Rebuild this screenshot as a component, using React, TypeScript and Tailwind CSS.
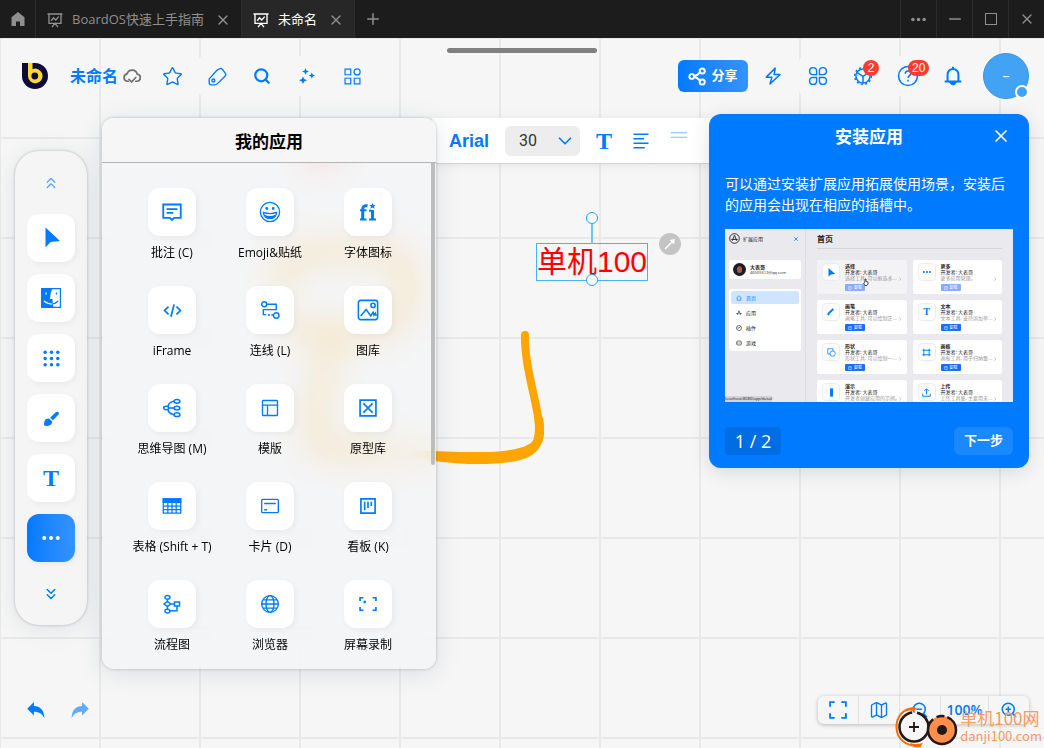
import { useState } from 'react'
import type { ReactNode } from 'react'
import { Bell, ChevronDown, ChevronsDown, ChevronsUp, Map as MapIcon, Minus, Plus, Search, Star, X, ZoomIn, ZoomOut } from 'lucide-react'

function Icon({ size = 24, width = 2, fill = 'none', children }: { size?: number; width?: number; fill?: string; children: ReactNode }) {
  return (
    <svg width={size} height={size} viewBox="0 0 24 24" fill={fill} stroke="currentColor" strokeWidth={width} aria-hidden="true">
      {children}
    </svg>
  )
}

const BoardIcon = () => (
  <Icon size={18} width={1.8}>
    <path d="M2 4h20M4 4v12.500h16V4M8 21.500l4-5 4 5M7 13l3-4 3 3 4-4.500" />
  </Icon>
)

// ---- title bar

function TitleBar() {
  return (
    <div className="flex h-[38px] shrink-0 items-stretch bg-[#1c1c1c] text-[#8f8f8f]">
      <button aria-label="主页" className="flex w-9 items-center justify-center border-r border-[#2c2c2c]">
        <svg width="14" height="14" viewBox="0 0 14 14" fill="currentColor" aria-hidden="true">
          <path d="M7 0l6.500 5.300V14H9V9.500H5V14H.5V5.300z" />
        </svg>
      </button>
      <Tab title="BoardOS快速上手指南" />
      <Tab title="未命名" active />
      <button aria-label="新建" className="flex w-9 items-center justify-center">
        <Plus size={18} />
      </button>
      <div className="ml-auto flex">
        <button aria-label="更多" className="flex w-9 items-center justify-center border-l border-[#2c2c2c]">
          <Icon size={15} fill="currentColor" width={0}>
            <circle cx="3" cy="12" r="2.800" /><circle cx="12" cy="12" r="2.800" /><circle cx="21" cy="12" r="2.800" />
          </Icon>
        </button>
        <button aria-label="最小化" className="flex w-9 items-center justify-center border-l border-[#2c2c2c]"><Minus size={18} /></button>
        <button aria-label="最大化" className="flex w-9 items-center justify-center border-l border-[#2c2c2c]"><span className="size-3 border border-current" /></button>
        <button aria-label="关闭" className="flex w-9 items-center justify-center border-l border-[#2c2c2c]"><X size={16} /></button>
      </div>
    </div>
  )
}

function Tab({ title, active }: { title: string; active?: boolean }) {
  return (
    <div className={`flex items-center border-r border-[#2c2c2c] px-[10px] pt-px text-[13px] ${active ? 'bg-[#272727] text-white' : ''}`}>
      <BoardIcon />
      <span className="ml-2 whitespace-nowrap">{title}</span>
      <button aria-label={`关闭 ${title}`} className="ml-[11px] text-[#8f8f8f]"><X size={16} /></button>
    </div>
  )
}

// ---- header

function ToolButton({ label, children, badge }: { label: string; children: ReactNode; badge?: string }) {
  return (
    <button aria-label={label} className="relative flex size-10 items-center justify-center rounded-lg bg-[#f6f6f6]">
      {children}
      {badge && (
        <span className="absolute top-1 left-5 flex h-4 min-w-4 items-center justify-center rounded-full bg-[#ff3b30] px-1 font-[Liberation_Sans,sans-serif] text-[12px] leading-4 text-white">
          {badge}
        </span>
      )}
    </button>
  )
}

function Header() {
  return (
    <header className="flex h-[46px] items-center text-[#007aff]">
      <svg className="ml-[7px]" width="26" height="26" viewBox="0 0 26 26" aria-label="BoardOS">
        <path d="M0 0h13a13 13 0 1 1-13 13z" fill="#0e0a3c" />
        <path d="M6 0h4.500v6.200A7.300 7.300 0 1 1 6 13z" fill="#ffd92e" />
        <circle cx="12.800" cy="13" r="3.400" fill="#0e0a3c" />
      </svg>
      <h1 className="ml-[22px] text-base font-semibold whitespace-nowrap">未命名</h1>
      <span className="ml-[5px] text-[#6f6f6f]">
        <Icon size={18} width={2.300}>
          <path d="M7 19H6a5 5 0 0 1-.5-9.900A7 7 0 0 1 19 9.500a4.800 4.800 0 0 1 0 9.500h-2" strokeLinecap="round" />
          <path d="M8 16.500l3.500 3.500 5.500-6" strokeLinecap="round" />
        </Icon>
      </span>
      <div className="ml-[11px] flex gap-[5px]">
        <ToolButton label="收藏"><Star size={21} strokeWidth={1.600} /></ToolButton>
        <ToolButton label="标签">
          <Icon size={19} width={1.700}>
            <path d="M1.500 15L11 4.500q2-2 4.500-2.500 1.700-.3 2.700 1L22 8q1.200 1.700-.3 3.500L12 21q-1.500 1.500-4 1.500H4q-2.500 0-2.500-2.500z" />
            <circle cx="6.800" cy="17" r="1.900" />
          </Icon>
        </ToolButton>
        <ToolButton label="搜索"><Search size={18} strokeWidth={3} /></ToolButton>
        <ToolButton label="智能">
          <svg width="16" height="16" viewBox="0 0 16 16" fill="currentColor" aria-hidden="true">
            <path d="M6.500 0l1 2.400 2.500 1-2.500 1-1 2.400-1-2.400-2.500-1 2.500-1zM12.800 4.500l.9 2.100 2.300.9-2.300.9-.9 2.300-.9-2.300-2.200-.9 2.200-.9zM4 8.500l1.200 2.600L8 12.300l-2.800 1.200L4 16l-1.200-2.500L0 12.300l2.800-1.200z" />
          </svg>
        </ToolButton>
        <ToolButton label="组件">
          <Icon size={17} width={1.700}>
            <path d="M1.500 1.500h8v8h-8zM1.500 14.500h8v8h-8zM14.500 14.500h8v8h-8z" /><circle cx="18.500" cy="5.500" r="4.300" />
          </Icon>
        </ToolButton>
      </div>

      <div className="ml-auto flex items-center gap-[5px]">
        <button className="flex h-8 w-[70px] items-center justify-center gap-1 rounded-md bg-linear-to-r from-[#007aff] to-[#3393ff] text-[13px] font-bold whitespace-nowrap text-white">
          <Icon size={19} width={2.500}>
            <circle cx="4.800" cy="12" r="3" /><circle cx="18" cy="5" r="3.200" /><circle cx="18" cy="19" r="3.200" />
            <path d="M7.800 11.500q4-.5 7-4.500M7.800 12.500q4 .5 7 4.500" />
          </Icon>
          分享
        </button>
        <ToolButton label="快捷">
          <Icon size={18} width={2}><path d="M15 1.500L3 13.500h7.500L8 22.500 21.500 10H13.500z" strokeLinejoin="round" /></Icon>
        </ToolButton>
        <ToolButton label="应用">
          <Icon size={20} width={1.700}>
            <path d="M10.300 10.300H6a4.200 4.200 0 1 1 4.300-4.200zM13.700 10.300H18a4.200 4.200 0 1 0-4.300-4.200zM10.300 13.700H6a4.200 4.200 0 1 0 4.300 4.200zM13.700 13.700H18a4.200 4.200 0 1 1-4.300 4.200z" />
          </Icon>
        </ToolButton>
        <ToolButton label="插件" badge="2">
          <Icon size={20} width={1.800}>
            <circle cx="12" cy="12" r="8.500" /><circle cx="12" cy="12" r="10" strokeDasharray="2.500 2.740" />
            <path d="M12 12.500V20M12 12.500L5 8M12 12.500l7-4.500" />
          </Icon>
        </ToolButton>
        <ToolButton label="帮助" badge="20">
          <Icon size={22} width={1.700}>
            <circle cx="12" cy="12" r="10.300" />
            <path d="M9 9.500c0-4 6-4 6-.2 0 2.400-3 2.200-3 5M12 16.200v1.900" />
          </Icon>
        </ToolButton>
        <ToolButton label="通知">
          <Icon size={20} width={2.400}>
            <path d="M12 1v3M5.500 18v-8a6.500 6.500 0 0 1 13 0v8M2 18.500h20" /><path d="M9.500 20.500q2.500 3 5 0z" fill="currentColor" />
          </Icon>
        </ToolButton>
        <button aria-label="账户" className="relative ml-[5px] flex size-[46px] items-center justify-center rounded-full border border-[#3b93dc] bg-[#42a3f5] text-sm text-white">
          –
          <span className="absolute -right-px -bottom-px size-[14px] rounded-full border-2 border-white bg-[#42a3f5]" />
        </button>
      </div>
    </header>
  )
}

// ---- left dock

const tools: { label: string; icon: ReactNode; active?: boolean }[] = [
  { label: '选择', icon: <Icon size={24} width={0} fill="currentColor"><path d="M6.500 1.500v20l5-5.500L21 15z" /></Icon> },
  {
    label: '访达',
    icon: (
      <svg width="20" height="20" viewBox="0 0 20 20" fill="none" stroke="currentColor" aria-hidden="true">
        <path d="M.6.600h18.800v18.800H.6z" strokeWidth="1.200" />
        <path d="M0 0h11.500Q9 5 9 11h2.500q0 5 1 9H0z" fill="currentColor" stroke="none" />
        <path d="M5 4.500v2" stroke="#fff" strokeWidth="1.300" />
        <path d="M15.500 4.500v2" strokeWidth="1.300" />
        <path d="M3 13q3.500 3 8.500 3" stroke="#fff" strokeWidth="1.200" />
        <path d="M11.500 16q3-.3 5.700-3" strokeWidth="1.200" />
      </svg>
    ),
  },
  {
    label: '形状',
    icon: (
      <Icon size={19} width={0} fill="currentColor">
        {[4, 12, 20].map((y) => [4, 12, 20].map((x) => <circle key={`${x}-${y}`} cx={x} cy={y} r="2.200" />))}
      </Icon>
    ),
  },
  {
    label: '画笔',
    icon: (
      <Icon size={17} width={0} fill="currentColor">
        <path d="M20 2.500a2.500 2.500 0 0 1 2 4L14 14.500 10 10.800l8-7.500q1-.8 2-.8zM8.500 12l4.200 4c.5 5-3.700 7.500-11.200 6 0-5 .5-10 7-10z" />
      </Icon>
    ),
  },
  { label: '文本', icon: <span className="font-[Liberation_Serif,serif] text-2xl font-bold">T</span> },
  {
    label: '更多',
    active: true,
    icon: (
      <Icon size={18} width={0} fill="currentColor">
        <circle cx="3" cy="12" r="2.700" /><circle cx="12" cy="12" r="2.700" /><circle cx="21" cy="12" r="2.700" />
      </Icon>
    ),
  },
]

function Dock() {
  return (
    <nav className="mt-[37px] flex w-[72px] shrink-0 flex-col items-center rounded-3xl bg-[#f5f5f5] text-[#007aff] shadow-[0_0_3px_rgba(0,0,0,0.25),0_4px_24px_rgba(60,90,110,0.12)]">
      <button aria-label="向上" className="flex h-[63px] items-center opacity-60"><ChevronsUp size={18} /></button>
      <div className="flex flex-col gap-3">
        {tools.map((t) => (
          <button
            key={t.label}
            aria-label={t.label}
            className={`flex size-12 items-center justify-center rounded-xl shadow-[2px_2px_6px_rgba(0,0,0,0.05)] ${t.active ? 'bg-linear-to-r from-[#007aff] to-[#3393ff] text-white' : 'bg-white'}`}
          >
            {t.icon}
          </button>
        ))}
      </div>
      <button aria-label="向下" className="flex h-[63px] items-center"><ChevronsDown size={18} /></button>
    </nav>
  )
}

// ---- apps panel

const apps: { name: string; icon: ReactNode }[] = [
  { name: '批注 (C)', icon: <Icon size={20} width={2.200}><path d="M1.500 3h21v16h-8L12 21.500 9.500 19h-8zM5.500 8.500h13M5.500 13h8" /></Icon> },
  {
    name: 'Emoji&贴纸',
    icon: (
      <Icon size={22} width={1.400}>
        <circle cx="12" cy="12" r="10.500" />
        <path d="M4.800 12.500q7.200 2.500 14.400 0-.5 6.500-7.200 6.500t-7.200-6.500z" /><path d="M6.500 16q5.500 2 11 0-1.500 3-5.500 3t-5.500-3z" fill="currentColor" />
        <circle cx="8.500" cy="8.200" r=".9" fill="currentColor" /><circle cx="15.500" cy="8.200" r=".9" fill="currentColor" />
      </Icon>
    ),
  },
  {
    name: '字体图标',
    icon: (
      <svg width="18" height="18" viewBox="0 0 18 18" fill="none" stroke="currentColor" strokeWidth="3" aria-hidden="true">
        <path d="M3.700 16.500V6.500Q3.700 2 8.500 2.800" /><path d="M1 7.300h6.500M1 16.500h6.500M10 16.500h7M10 7.800h3" strokeWidth="2" /><path d="M13.500 17V7" />
        <path d="M13.500 0l.9 2h2.300L15 3.500l.6 2.200-2.100-1.200-2.100 1.200.6-2.200L10.300 2h2.300z" fill="currentColor" stroke="none" />
      </svg>
    ),
  },
  { name: 'iFrame', icon: <Icon size={19} width={2.200}><path d="M7 7l-5 5 5 5M17 7l5 5-5 5M14 4.500L10 20" /></Icon> },
  {
    name: '连线 (L)',
    icon: (
      <Icon size={20} width={1.700}>
        <circle cx="5" cy="5" r="3" /><circle cx="19.500" cy="18.500" r="3.300" /><path d="M8 5h11.500v6.500H4v6h3.500M9.500 18h2.500M13.500 18h2.500" />
      </Icon>
    ),
  },
  {
    name: '图库',
    icon: (
      <Icon size={22} width={1.700}>
        <rect x="1.500" y="1.500" width="21" height="21" rx="2.500" /><circle cx="17.500" cy="7" r="2.300" />
        <path d="M4 18.500l6-7 5 7 2.500-4 1 3 1.500-2 1 3" />
      </Icon>
    ),
  },
  {
    name: '思维导图 (M)',
    icon: (
      <Icon size={20} width={1.800}>
        <ellipse cx="5" cy="12" rx="3" ry="2" /><ellipse cx="18" cy="4" rx="3.500" ry="2.200" /><ellipse cx="18" cy="12" rx="3.500" ry="2.200" /><ellipse cx="18" cy="20" rx="3.500" ry="2.200" />
        <path d="M8 12h6.500M14.500 4Q8 5 7 10.500M14.500 20Q8 19 7 13.500" />
      </Icon>
    ),
  },
  { name: '模版', icon: <Icon size={20} width={1.600}><rect x="3" y="3" width="18" height="18" rx="1" /><path d="M3 8.500h18M9 8.500V21" /></Icon> },
  { name: '原型库', icon: <Icon size={20} width={2}><path d="M2.500 2.500h19v19h-19zM6.500 6.500l11 11M17.500 6.500l-11 11" /></Icon> },
  {
    name: '表格 (Shift + T)',
    icon: (
      <Icon size={20} width={1.500}>
        <path d="M1.500 3.500h21v17h-21zM1.500 12h21M1.500 16.300h21M7 8v12.500M12 8v12.500M17 8v12.500" /><path d="M1.500 3.500h21v4h-21z" fill="currentColor" />
      </Icon>
    ),
  },
  { name: '卡片 (D)', icon: <Icon size={20} width={1.600}><rect x="2" y="4" width="20" height="16" rx="1.500" /><path d="M5 9h14M5 16.500h3.500" /></Icon> },
  { name: '看板 (K)', icon: <Icon size={20} width={2}><path d="M3.500 3.500h17v17h-17zM8 7v10M12 7v7.500M16 7v5" /></Icon> },
  {
    name: '流程图',
    icon: (
      <Icon size={20} width={1.800}>
        <ellipse cx="6.500" cy="4" rx="3" ry="2.300" /><path d="M6.500 6.500V9M6.500 9l4 3-4 3-4-3zM6.500 15v3M10.500 12H15M15 9.500h6v5h-6zM18 14.500V20H9.500" /><ellipse cx="6.500" cy="20.500" rx="3" ry="2.300" />
      </Icon>
    ),
  },
  {
    name: '浏览器',
    icon: <Icon size={20} width={1.600}><circle cx="12" cy="12" r="10" /><ellipse cx="12" cy="12" rx="4.800" ry="10" /><path d="M2 12h20M3.500 7h17M3.500 17h17" /></Icon>,
  },
  {
    name: '屏幕录制',
    icon: <Icon size={20} width={2}><path d="M2.500 8.500V4.500H6.500M17.500 4.500h4V8.500M21.500 15.500v4h-4M6.500 19.500h-4v-4" /><circle cx="8" cy="9.500" r="1.600" fill="currentColor" strokeWidth="0" /></Icon>,
  },
]

function AppsPanel() {
  return (
    <section className="relative z-10 mt-1 w-[334px] shrink-0 overflow-hidden rounded-xl bg-[#f3f4f6]/75 shadow-[0_0_3px_rgba(0,0,0,0.25),0_4px_24px_rgba(60,90,110,0.15)] backdrop-blur-lg">
      <h2 className="flex h-[45px] items-center justify-center border-b border-[#b4b4b4] bg-[#f6f6f6] pt-1 text-[17px] font-bold text-black">我的应用</h2>
      <div className="grid grid-cols-[repeat(3,98px)] justify-center gap-y-[25px] pt-[25px] pb-4 pl-0.5">
        {apps.map((a) => (
          <button key={a.name} className="flex flex-col items-center gap-[9px] text-xs text-black">
            <span className="flex size-12 items-center justify-center rounded-xl bg-white text-[#007aff] shadow-[2px_2px_6px_rgba(0,0,0,0.05)]">{a.icon}</span>
            <span className="whitespace-nowrap">{a.name}</span>
          </button>
        ))}
      </div>
      <div className="absolute top-[45px] right-px h-[302px] w-1 rounded-b-full bg-[#bdbdbd]" />
    </section>
  )
}

// ---- text format toolbar

function TextToolbar() {
  const [size, setSize] = useState('30')
  return (
    <div className="-mx-[19px] mt-1 flex h-[46px] min-w-0 flex-1 items-center overflow-hidden border-b border-[#d2d2d2] bg-white pl-[17px] text-[#007aff] shadow-[0_1px_10px_rgba(0,0,0,0.08)]">
      <button className="font-[Liberation_Sans,sans-serif] text-lg font-bold">Arial</button>
      <div className="relative ml-4 w-[75px] shrink-0">
        <select
          aria-label="字号"
          value={size}
          onChange={(e) => setSize(e.target.value)}
          className="h-[30px] w-full appearance-none rounded-md bg-[#ededed] pl-[14px] font-[Roboto,sans-serif] text-base text-[#333]"
        >
          {['24', '30', '36'].map((s) => <option key={s}>{s}</option>)}
        </select>
        <ChevronDown size={22} strokeWidth={1.800} className="pointer-events-none absolute top-1 right-1" />
      </div>
      <button aria-label="文本样式" className="ml-4 shrink-0 font-[Liberation_Serif,serif] text-2xl font-bold">T</button>
      <button aria-label="对齐" className="ml-5 shrink-0">
        <Icon size={18} width={2.300}><path d="M2 3h20M2 9h14M2 15h20M2 21h15" /></Icon>
      </button>
      <button aria-label="行距" className="mb-3 ml-5 shrink-0 opacity-50">
        <Icon size={18} width={1.500}><path d="M1 9h22M1 15h22" /></Icon>
      </button>
    </div>
  )
}

// ---- guide card

const previewCards: { name: string; desc: string; icon: ReactNode; dim?: boolean }[] = [
  { name: '选择', desc: '选择工具, 可以框选多...', dim: true, icon: <Icon size={9} width={0} fill="currentColor"><path d="M4 0v23l6-6 12-1z" /></Icon> },
  { name: '更多', desc: '更多应用管理。', dim: true, icon: <Icon size={8} width={0} fill="currentColor"><circle cx="3" cy="12" r="3" /><circle cx="12" cy="12" r="3" /><circle cx="21" cy="12" r="3" /></Icon> },
  { name: '画笔', desc: '画笔工具, 可以绘制正...', icon: <Icon size={8} width={6}><path d="M3 21l3-6L19 3" /></Icon> },
  { name: '文本', desc: '文本工具, 支持添加单...', icon: <span className="font-[Liberation_Serif,serif] text-[10px] font-bold">T</span> },
  { name: '形状', desc: '形状工具, 可以绘制一...', icon: <Icon size={9}><path d="M2 2h14v14H2z" /><circle cx="15" cy="15" r="7" fill="#fff" /></Icon> },
  { name: '画板', desc: '画板工具, 用于归纳整...', icon: <Icon size={9} width={2.500}><path d="M1 6h22M1 18h22M5 2v20M19 2v20" /></Icon> },
  { name: '演示', desc: '开发者创建应用的示例。', icon: <Icon size={9} width={0} fill="currentColor"><path d="M8 1h8v22H8z" /></Icon> },
  { name: '上传', desc: '上传工具集, 主要用来...', icon: <Icon size={9} width={2.500}><path d="M12 17V3M6 8l6-6 6 6M2 15v7h20v-7" /></Icon> },
]

const previewNav: { name: string; icon: ReactNode }[] = [
  { name: '首页', icon: <path d="M2 12L12 3l10 9M5 11v10h14V11" /> },
  { name: '应用', icon: <path d="M12 3L6 20M12 3l6 17M1 14h8M15 14h8" /> },
  { name: '插件', icon: <><circle cx="12" cy="12" r="10" /><path d="M12 12l6-6M12 12H6" /></> },
  { name: '游戏', icon: <><rect x="2" y="4" width="20" height="16" rx="6" /><path d="M7 9v6M16 9v6" /></> },
]

function Preview() {
  return (
    <div className="relative mt-[14px] flex h-[173px] overflow-hidden bg-[#e9e9ee] text-[5px] leading-[6px] text-[#222]">
      <div className="w-[81px] shrink-0 border-r border-[#dcdce2] px-1 pt-1">
        <div className="flex h-[11px] items-center gap-[3px]">
          <Icon size={11} width={2}><circle cx="12" cy="12" r="10.500" /><path d="M12 5L7 17M12 5l5 12M5 14h14" /></Icon>
          <span className="flex-1">扩展应用</span>
          <span className="mr-[2px] text-[#007aff]"><X size={6} strokeWidth={3} /></span>
        </div>
        <div className="mt-4 flex h-[19px] items-center gap-1 rounded-xs bg-white px-1">
          <svg width="13" height="13" viewBox="0 0 13 13" aria-hidden="true">
            <circle cx="6.500" cy="6.500" r="6.500" fill="#1b1b2a" /><ellipse cx="6.500" cy="6.500" rx="2.600" ry="3.500" fill="#a65c46" /><path d="M3.500 5q3-4 6 0l-1-3h-4z" fill="#241a22" />
          </svg>
          <div>
            <div className="font-bold">大表哥</div>
            <div className="text-[4px]">46505512@qq.com</div>
          </div>
        </div>
        <div className="mt-[10px] flex flex-col gap-[2px] rounded-xs bg-white p-[2px]">
          {previewNav.map((n, i) => (
            <div key={n.name} className={`flex h-[13px] items-center gap-1 rounded-xs pl-[5px] ${i === 0 ? 'bg-[#cfe4ff] text-[#007aff]' : ''}`}>
              <Icon size={6} width={2.500}>{n.icon}</Icon>
              {n.name}
            </div>
          ))}
        </div>
      </div>
      <div className="min-w-0 flex-1 px-[11px] pt-1">
        <h4 className="h-4 border-b border-[#d4d4da] text-[8px] leading-[12px] font-bold">首页</h4>
        <div className="mt-[11px] grid grid-cols-2 gap-x-[6px] gap-y-[6px]">
          {previewCards.map((c) => (
            <div key={c.name} className={`flex h-[34px] min-w-0 gap-[5px] rounded-xs px-[5px] pt-[3px] ${c.name === '选择' ? 'bg-[#f3f3f5]' : 'bg-white'}`}>
              <span className="flex size-[18px] shrink-0 items-center justify-center rounded border border-[#ececf0] bg-white text-[#007aff]">{c.icon}</span>
              <div className="min-w-0 flex-1 whitespace-nowrap">
                <div className="font-bold">{c.name}</div>
                <div>开发者: 大表哥</div>
                <div className="text-[#999]">{c.desc}</div>
                <div className={`mt-[3px] flex h-[7px] w-5 items-center justify-center gap-[2px] rounded-[1px] text-[4px] text-white ${c.dim ? 'bg-[#86acfb]' : 'bg-[#1b6cff]'}`}>
                  <Icon size={4} width={3}><path d="M2 5h20M5 5v17h14V5M9 1h6" /></Icon>卸载
                </div>
              </div>
              <span className="self-center text-[#999]"><Icon size={4} width={3}><path d="M8 2l9 10-9 10" /></Icon></span>
            </div>
          ))}
        </div>
      </div>
      <div className="absolute bottom-0 left-0 bg-[#d3d3d9] text-[4px] leading-[6px]">localhost:8080/app/detail</div>
      <svg className="absolute top-[49px] left-[138px]" width="6" height="8" viewBox="0 0 6 8" fill="#fff" stroke="#222" strokeWidth=".8" aria-hidden="true">
        <path d="M2 4V1h1v2.500l2 .5v2L4 7.500H2L.6 5z" />
      </svg>
    </div>
  )
}

function GuideCard() {
  return (
    <section className="relative z-10 w-80 shrink-0 rounded-xl bg-[#007aff] px-4 pb-[13px] text-white shadow-[0_4px_20px_rgba(0,0,0,0.12)]">
      <div className="relative flex h-[46px] items-center justify-center">
        <h2 className="text-[17px] font-bold">安装应用</h2>
        <button aria-label="关闭引导" className="absolute right-0 pr-[2px] pb-[2px]"><X size={20} /></button>
      </div>
      <p className="mt-[13px] text-sm leading-[21px]">可以通过安装扩展应用拓展使用场景，安装后的应用会出现在相应的插槽中。</p>
      <Preview />
      <div className="mt-[25px] flex h-7 justify-between">
        <span className="flex w-14 items-center justify-center rounded bg-[#006de4] text-lg whitespace-nowrap">1 / 2</span>
        <button className="w-[59px] rounded-md bg-[#1a88ff] text-[13px] font-bold whitespace-nowrap">下一步</button>
      </div>
    </section>
  )
}

// ---- canvas content

function Canvas() {
  return (
    <div className="absolute inset-0 overflow-hidden bg-[#f6f6f6] bg-[linear-gradient(to_right,#e9e9e9_2px,transparent_2px),linear-gradient(to_bottom,#e9e9e9_2px,transparent_2px)] bg-size-[100px_100px] bg-position-[-1px_-1px]">
      <svg className="absolute inset-0 size-full" fill="none" strokeLinecap="round" strokeLinejoin="round" aria-hidden="true">
        <circle cx="323" cy="112" r="13" fill="#ff3b30" />
        <path d="M280 250C282 226 290 216 320 214C370 216 404 208 408 240C412 272 400 284 370 292C330 298 300 290 290 290M332 296C328 330 314 370 314 390C314 418 340 414 380 413" stroke="#ffa500" strokeWidth="14" />
        <path d="M380 415C460 418 540 426 540 396C540 372 524 330 525 297" stroke="#ffa500" strokeWidth="8" />
        <path d="M430 418C460 422 490 424 518 418C537 414 541 402 539 382" stroke="#ffa500" strokeWidth="9" />
      </svg>
      <div className="absolute top-[205px] left-[536px] border border-[#42b4fb] font-[Liberation_Sans,Noto_Sans_CJK_SC,sans-serif] text-[30px] leading-[36px] whitespace-nowrap text-[#ff0000]">
        单机100
        <span className="absolute -top-5 left-1/2 h-5 w-0.5 -translate-x-1/2 bg-[#6cc5fb]" />
        <span className="absolute -top-8 left-1/2 size-3 -translate-x-1/2 rounded-full border border-[#1ba3f8] bg-white" />
        <span className="absolute -bottom-[6px] left-1/2 size-3 -translate-x-1/2 rounded-full border border-[#1ba3f8] bg-white" />
      </div>
      <span className="absolute top-[195px] left-[659px] flex size-[22px] items-center justify-center rounded-full bg-[#c4c4c4] text-white">
        <Icon size={12} width={3}><path d="M2 22L16 8" /><path d="M11 4l11-2-2 11z" fill="currentColor" strokeWidth="0" /></Icon>
      </span>
    </div>
  )
}

function Footer() {
  const cell = 'flex items-center justify-center border-r border-[#e2e2e2] w-[41px]'
  return (
    <footer className="flex items-center justify-between pb-6 text-[#007aff]">
      <div className="flex gap-6 pl-[11px]">
        <button aria-label="撤销">
          <Icon size={20} width={0} fill="currentColor"><path d="M9.500 2.500v4.700C17 7.500 22 12 22 22c-2.500-5.500-6-8-12.500-8v4.500L1.500 10.500z" /></Icon>
        </button>
        <button aria-label="重做" className="opacity-60">
          <Icon size={20} width={0} fill="currentColor"><path d="M14.500 2.500v4.700C7 7.500 2 12 2 22c2.500-5.500 6-8 12.500-8v4.500l8-8z" /></Icon>
        </button>
      </div>
      <div className="flex h-7 rounded-md bg-[#f6f6f6] shadow-[0_1px_4px_rgba(0,0,0,0.25)]">
        <button aria-label="全屏" className={cell}>
          <Icon size={20} width={2.200}><path d="M2.500 8V2.500H8M16 2.500h5.500V8M21.500 16v5.500H16M8 21.500H2.500V16" /></Icon>
        </button>
        <button aria-label="地图" className={cell}><MapIcon size={20} strokeWidth={1.600} /></button>
        <button aria-label="缩小" className={cell}><ZoomOut size={18} /></button>
        <button className="flex w-12 items-center justify-center border-r border-[#e2e2e2] text-sm font-semibold">100%</button>
        <button aria-label="放大" className="flex w-10 items-center justify-center"><ZoomIn size={18} /></button>
      </div>
    </footer>
  )
}

function Watermark() {
  return (
    <div className="pointer-events-none absolute right-0 bottom-0 z-20 flex items-center gap-px pr-[2px] text-[#f79a63]">
      <svg width="64" height="42" viewBox="0 0 64 42" fill="none" aria-hidden="true">
        <path d="M20 2C8 2 1 11 1.500 22S11 41 26 40" stroke="#ff6a00" strokeWidth="2" />
        <path d="M10 5q6-5 12-3l-3 3q-5-1-9 0zM15 37q5 2 13 0l-3 4q-7 1-10-4z" fill="#ff6a00" />
        <circle cx="19" cy="21" r="14.500" fill="#f6f6f6" stroke="#231815" strokeWidth="2.500" strokeDasharray="66 5 20 0" />
        <path d="M19 16v10M14 21h10" stroke="#231815" strokeWidth="1.800" />
        <circle cx="47" cy="24" r="14" fill="#ff8f4a" stroke="#231815" strokeWidth="2.500" strokeDasharray="56 4 8 3 17 0" />
        <circle cx="47" cy="24" r="5" fill="#231815" />
      </svg>
      <div className="font-[Noto_Sans_CJK_SC,sans-serif] whitespace-nowrap">
        <div className="text-[17px] leading-[18px]">单机100网</div>
        <div className="text-[13px] leading-[18px]">danji100.com</div>
      </div>
    </div>
  )
}

export default function App() {
  return (
    <div className="flex min-h-screen flex-col font-[Open_Sans,Noto_Sans_CJK_SC,sans-serif]">
      <TitleBar />
      <main className="relative flex flex-1 flex-col overflow-hidden">
        <Canvas />
        <div className="relative flex flex-1 flex-col px-[15px] pt-[15px]">
          <Header />
          <div className="mt-[15px] flex flex-1 items-start gap-[15px]">
            <Dock />
            <AppsPanel />
            <TextToolbar />
            <GuideCard />
          </div>
          <Footer />
        </div>
        <span className="absolute top-[10px] left-1/2 h-[5px] w-[150px] -translate-x-1/2 rounded-full bg-[#808080]" />
        <Watermark />
      </main>
    </div>
  )
}
